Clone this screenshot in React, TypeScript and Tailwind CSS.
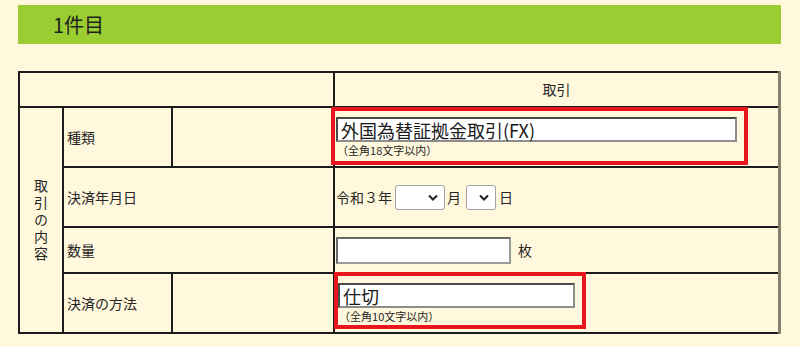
import React from "react";

const font = { fontFamily: '"Noto Sans CJK JP", "Noto Sans", sans-serif' };

function Select({ w }: { w: string }) {
  return (
    <div
      className={`relative inline-block h-[25px] ${w} rounded-[3px] border border-[#a3a3a3] bg-white align-middle`}
    >
      <svg
        className="absolute right-[6px] top-[8px]"
        width="10"
        height="7"
        viewBox="0 0 10 7"
      >
        <path d="M1 1.5 L5 5.5 L9 1.5" fill="none" stroke="#222" strokeWidth="2" />
      </svg>
    </div>
  );
}

export default function App() {
  const cell = "border-2 border-[#1c1c1c] p-0";
  return (
    <div className="min-h-screen bg-[#FFF8DC] px-[18px] pt-[5px] text-[#262626]" style={font}>
      <div className="flex h-[39px] w-[763px] items-center bg-[#9ACD32] pl-[35px] text-[20px] leading-none text-[#1e1e1e]">
        1件目
      </div>
      <table className="mt-[27px] w-[763px] table-fixed border-collapse border-r-[3px] border-r-[#857f6e] text-[14px]">
        <colgroup>
          <col className="w-[44px]" />
          <col className="w-[109px]" />
          <col className="w-[162px]" />
          <col />
        </colgroup>
        <tbody>
          <tr className="h-[35px]">
            <td colSpan={3} className={cell}></td>
            <td className={`${cell} text-center`}>取引</td>
          </tr>
          <tr className="h-[60px]">
            <td rowSpan={4} className={`${cell} text-center`}>
              <div className="flex justify-center pt-[2px]">
                <span className="leading-[20px] tracking-[3px] [writing-mode:vertical-rl]">取引の内容</span>
              </div>
            </td>
            <td className={`${cell} pl-[3px]`}>種類</td>
            <td className={cell}></td>
            <td className={`${cell} pl-[1px]`}>
              <div className="relative w-[401px]">
                <div className="pointer-events-none absolute -bottom-[8px] -left-[5px] -right-[11px] -top-[10px] border-4 border-[#e8171f]"></div>
                <div className="flex h-[25px] items-center border-2 border-b-[#8d8d8d] border-l-[#4a4a4a] border-r-[#8d8d8d] border-t-[#4a4a4a] bg-white pl-[3px] text-[18px] leading-none text-[#1a1a1a]">
                  外国為替証拠金取引(FX)
                </div>
                <div className="mt-[1px] pl-[1px] text-[11px] leading-[14px]">（全角18文字以内）</div>
              </div>
            </td>
          </tr>
          <tr className="h-[60px]">
            <td colSpan={2} className={`${cell} pl-[3px]`}>決済年月日</td>
            <td className={`${cell} pl-[1px]`}>
              <div className="flex items-center">
                <span>令和３年</span>
                <span className="ml-[3px]"><Select w="w-[50px]" /></span>
                <span className="ml-[2px]">月</span>
                <span className="ml-[5px]"><Select w="w-[30px]" /></span>
                <span className="ml-[3px]">日</span>
              </div>
            </td>
          </tr>
          <tr className="h-[46px]">
            <td colSpan={2} className={`${cell} pl-[3px]`}>数量</td>
            <td className={`${cell} pl-[1px]`}>
              <div className="flex items-center">
                <div className="h-[27px] w-[175px] border-2 border-b-[#9a9a9a] border-l-[#6a6a6a] border-r-[#9a9a9a] border-t-[#6a6a6a] bg-white"></div>
                <span className="ml-[7px]">枚</span>
              </div>
            </td>
          </tr>
          <tr className="h-[60px]">
            <td className={`${cell} pl-[3px]`}>決済の方法</td>
            <td className={cell}></td>
            <td className={`${cell} pl-[3px]`}>
              <div className="relative w-[237px]">
                <div className="pointer-events-none absolute -bottom-[6px] -left-[4px] -right-[11px] -top-[11px] border-4 border-[#e8171f]"></div>
                <div className="flex h-[25px] items-center border-2 border-b-[#8d8d8d] border-l-[#4a4a4a] border-r-[#8d8d8d] border-t-[#4a4a4a] bg-white pl-[3px] text-[18px] leading-none text-[#1a1a1a]">
                  仕切
                </div>
                <div className="mt-[1px] pl-[1px] text-[11px] leading-[14px]">（全角10文字以内）</div>
              </div>
            </td>
          </tr>
        </tbody>
      </table>
    </div>
  );
}
